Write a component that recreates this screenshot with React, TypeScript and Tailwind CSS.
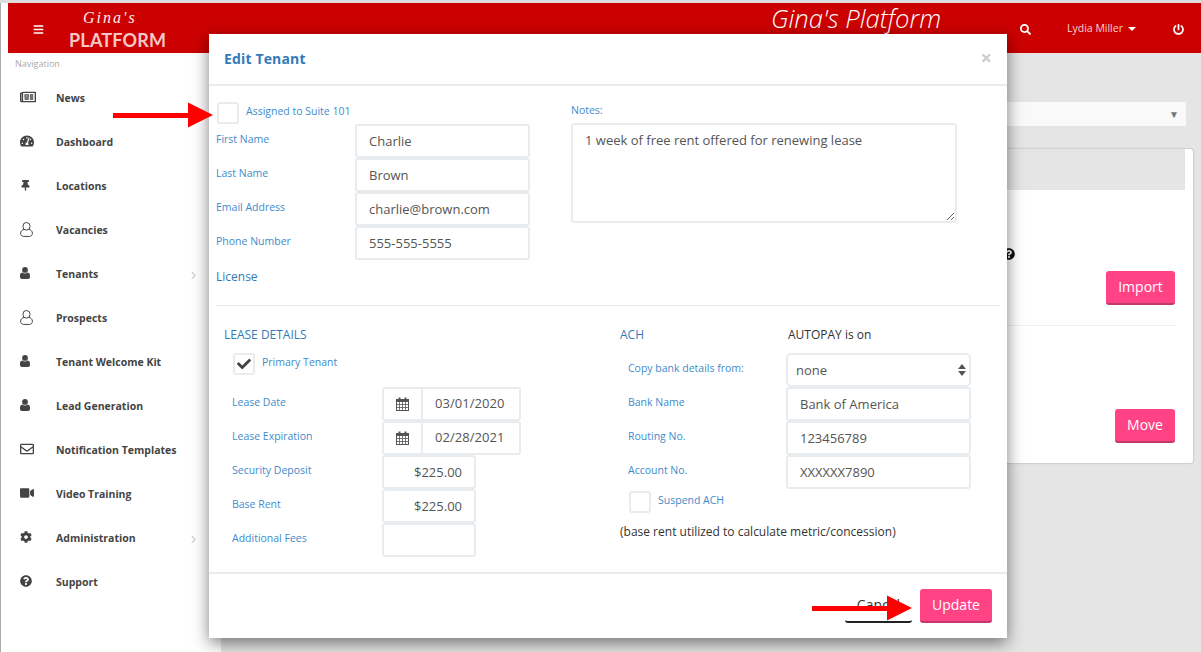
import type { ReactNode } from 'react';
import {
  FaBars,
  FaCheck,
  FaCog,
  FaPowerOff,
  FaQuestionCircle,
  FaRegEnvelope,
  FaRegNewspaper,
  FaSearch,
  FaTachometerAlt,
  FaThumbtack,
  FaVideo,
} from 'react-icons/fa';
import { SlArrowRight } from 'react-icons/sl';

type NavItem = {
  label: string;
  icon: ReactNode;
  chevron?: boolean;
};

function UserSolid() {
  return (
    <svg width="10" height="12" viewBox="0 0 10 12" fill="currentColor">
      <circle cx="5" cy="2.9" r="2.9" />
      <path d="M2.2 5.6C3 6.2 4 6.5 5 6.5s2-.3 2.8-.9C9.2 6 10 7 10 8.6V10c0 1.2-.8 2-2 2H2c-1.2 0-2-.8-2-2V8.6C0 7 .8 6 2.2 5.6z" />
    </svg>
  );
}

function UserOutline() {
  return (
    <svg width="13" height="15" viewBox="0 0 13 15" fill="none" stroke="currentColor" strokeWidth="1">
      <ellipse cx="6.5" cy="4.3" rx="3.6" ry="3.8" />
      <path d="M4 7.4C2 8 .6 9.2.6 11.2c0 1.9 1.2 3.2 3 3.2h5.8c1.8 0 3-1.3 3-3.2 0-2-1.4-3.2-3.4-3.8" />
    </svg>
  );
}

const navItems: NavItem[] = [
  { label: 'News', icon: <FaRegNewspaper size={16} /> },
  { label: 'Dashboard', icon: <FaTachometerAlt size={14} /> },
  { label: 'Locations', icon: <FaThumbtack size={11} /> },
  { label: 'Vacancies', icon: <UserOutline /> },
  { label: 'Tenants', icon: <UserSolid />, chevron: true },
  { label: 'Prospects', icon: <UserOutline /> },
  { label: 'Tenant Welcome Kit', icon: <UserSolid /> },
  { label: 'Lead Generation', icon: <UserSolid /> },
  { label: 'Notification Templates', icon: <FaRegEnvelope size={14} /> },
  { label: 'Video Training', icon: <FaVideo size={14} /> },
  { label: 'Administration', icon: <FaCog size={12} />, chevron: true },
  { label: 'Support', icon: <FaQuestionCircle size={12} /> },
];

function CalendarIcon() {
  return (
    <svg width="13" height="14" viewBox="0 0 13 14" className="text-[#555]">
      <rect x="0.5" y="2.5" width="12" height="11" fill="none" stroke="currentColor" />
      <rect x="0.5" y="2" width="12" height="3" fill="currentColor" />
      <rect x="2.5" y="0.5" width="2" height="3" fill="currentColor" />
      <rect x="8.5" y="0.5" width="2" height="3" fill="currentColor" />
      <path d="M3.5 5v8M6.5 5v8M9.5 5v8M1 7.5h11M1 10.5h11" stroke="currentColor" strokeWidth="0.8" fill="none" />
    </svg>
  );
}

function RedArrow({ className }: { className: string }) {
  return (
    <svg width="100" height="26" viewBox="0 0 100 26" className={className}>
      <rect x="0" y="11" width="76" height="5" fill="#ff0000" />
      <polygon points="75,0.5 100,13 75,25.5" fill="#ff0000" />
    </svg>
  );
}

function Checkbox({ checked }: { checked?: boolean }) {
  return (
    <span className="flex h-[22px] w-[22px] shrink-0 items-center justify-center rounded-[3px] border-2 border-[#e9ecef] bg-white text-[#444]">
      {checked && <FaCheck size={14} />}
    </span>
  );
}

function TextInput({
  value,
  className = 'w-[175px]',
  align = 'text-left',
}: {
  value: string;
  className?: string;
  align?: string;
}) {
  return (
    <input
      readOnly
      value={value}
      className={`h-[34px] rounded-[3px] border-2 border-[#e9ecef] bg-white px-3 text-[13px] text-[#555] outline-none ${align} ${className}`}
    />
  );
}

function FormRow({
  label,
  labelWidth,
  children,
}: {
  label: string;
  labelWidth: string;
  children: ReactNode;
}) {
  return (
    <div className="flex h-[34px]">
      <label className={`pt-[7px] text-[10.5px] leading-[16px] text-[#428bca] ${labelWidth}`}>
        {label}
      </label>
      {children}
    </div>
  );
}

function DateRow({ label, value }: { label: string; value: string }) {
  return (
    <FormRow label={label} labelWidth="w-[150px]">
      <div className="flex h-[34px] w-[139px] rounded-[3px] border-2 border-[#e9ecef] bg-white">
        <span className="flex w-[39px] items-center justify-center border-r-2 border-[#e9ecef]">
          <CalendarIcon />
        </span>
        <span className="flex flex-1 items-center pl-[12px] text-[13px] tracking-[0.05px] text-[#555]">{value}</span>
      </div>
    </FormRow>
  );
}

function PinkButton({ children, className }: { children: ReactNode; className: string }) {
  return (
    <button
      className={`h-[34px] rounded-[3px] border-b-2 border-[#c23a6c] bg-[#ff4385] pb-[2px] text-[14px] text-[#fff] ${className}`}
    >
      {children}
    </button>
  );
}

function Sidebar() {
  return (
    <aside className="h-[599px] w-[221px] shrink-0 border-l border-[#aaa] bg-white">
      <div className="h-[24px] pl-[14px] pt-[5px] text-[9px] leading-[12px] text-[#aaa]">Navigation</div>
      <nav>
        {navItems.map(({ label, icon, chevron }) => (
          <div key={label} className="flex h-[44px] items-center text-[#444]">
            <span className="flex w-[55px] shrink-0 justify-start pb-[4px] pl-[19px]">{icon}</span>
            <span className="flex-1 text-[10.5px] font-bold">{label}</span>
            {chevron && (
              <span className="mr-[24px] text-[#999]">
                <SlArrowRight size={7} />
              </span>
            )}
          </div>
        ))}
      </nav>
    </aside>
  );
}

function Header() {
  return (
    <header className="flex h-[50px] flex-1 items-center bg-[#cc0000] text-white">
      <FaBars size={11} className="ml-[25px] mt-[2px] shrink-0" />
      <div className="ml-[25px] mt-[2px] flex h-[40px] w-[98px] shrink-0 flex-col select-none">
        <span className="h-[22px] pl-[14px] font-['Liberation_Serif'] text-[16px] italic leading-[18px] tracking-[2px] text-[#fbeaea]">
          Gina's
        </span>
        <span className="font-['Lato'] text-[18px] leading-[18px] font-bold tracking-[0.2px] whitespace-nowrap text-[#f6c6c6]">
          PLATFORM
        </span>
      </div>
      <span className="ml-[604px] mb-[18px] w-[172px] shrink-0 whitespace-nowrap text-[25.6px] leading-[30px] font-light italic">
        Gina's Platform
      </span>
      <FaSearch size={11} className="ml-[77px] mt-[2px] shrink-0" />
      <span className="ml-[36px] mt-[2px] text-[10.5px] whitespace-nowrap text-[#f5d5d5]">Lydia Miller</span>
      <span className="ml-[5px] mt-[2px] h-0 w-0 border-x-[4px] border-t-[4px] border-x-transparent border-t-white" />
      <FaPowerOff size={11} className="ml-[37px] mt-[2px] shrink-0" />
    </header>
  );
}

function MainContent() {
  return (
    <main className="flex-1 pl-[8px] pr-[8px] pt-[49px]">
      <div className="mr-[7px] flex h-[24px] items-center justify-end bg-[#f9f9f9] pr-[7px] text-[10px] text-[#777]">
        ▼
      </div>
      <section className="mt-[23px] h-[314px] rounded-[3px] bg-white shadow-[0_0_2px_rgba(0,0,0,0.35)]">
        <div className="mr-[8px] h-[41px] bg-[#e5e5e5]" />
        <div className="flex flex-col items-end pr-[18px]">
          <FaQuestionCircle size={12} className="mr-[160px] mt-[58px] text-[#111]" />
          <PinkButton className="mt-[11px] w-[69px]">Import</PinkButton>
          <div className="mt-[20px] h-px w-full bg-[#eee]" />
          <PinkButton className="mt-[83px] w-[60px]">Move</PinkButton>
        </div>
      </section>
    </main>
  );
}

function EditTenantModal() {
  return (
    <div className="absolute left-[209px] top-[34px] flex h-[604px] w-[798px] flex-col bg-white shadow-[0_5px_15px_rgba(0,0,0,0.5)]">
      <div className="flex h-[52px] shrink-0 items-center justify-between border-b-2 border-[#e9ecef] pl-[15px] pr-[15px]">
        <h4 className="mb-[2px] text-[14px] font-bold tracking-[0.15px] text-[#337ab7]">Edit Tenant</h4>
        <span className="mb-[2px] text-[20px] font-bold text-[#ccc]">×</span>
      </div>

      <div className="flex h-[219px] shrink-0 pl-[7px]">
        <div className="w-[355px] pt-[16px]">
          <div className="ml-px flex h-[22px] items-start gap-[7px]">
            <Checkbox />
            <span className="pt-[1px] text-[10.5px] leading-[16px] text-[#428bca]">Assigned to Suite 101</span>
          </div>
          <FormRow label="First Name" labelWidth="w-[139px]">
            <TextInput value="Charlie" />
          </FormRow>
          <FormRow label="Last Name" labelWidth="w-[139px]">
            <TextInput value="Brown" />
          </FormRow>
          <FormRow label="Email Address" labelWidth="w-[139px]">
            <TextInput value="charlie@brown.com" />
          </FormRow>
          <FormRow label="Phone Number" labelWidth="w-[139px]">
            <TextInput value="555-555-5555" />
          </FormRow>
          <div className="flex h-[34px] items-center text-[12px] text-[#337ab7]">License</div>
        </div>
        <div className="pt-[17px]">
          <label className="block h-[14px] text-[10.5px] leading-[14px] text-[#428bca]">Notes:</label>
          <textarea
            readOnly
            className="mt-[6px] h-[100px] w-[386px] rounded-[3px] border-2 border-[#e9ecef] px-3 py-[6px] text-[13px] text-[#555] outline-none"
            defaultValue="1 week of free rent offered for renewing lease"
          />
        </div>
      </div>

      <div className="mx-[7px] h-px shrink-0 bg-[#e9ecef]" />

      <div className="flex h-[266px] shrink-0 pt-[20px]">
        <div className="w-[411px] pl-[15px]">
          <div className="h-[18px] text-[12px] leading-[18px] text-[#337ab7]">LEASE DETAILS</div>
          <div className="ml-[9px] mt-[9px] flex h-[22px] items-start gap-[7px]">
            <Checkbox checked />
            <span className="pt-[1px] text-[10.5px] leading-[16px] text-[#428bca]">Primary Tenant</span>
          </div>
          <div className="ml-[8px] mt-[12px]">
            <DateRow label="Lease Date" value="03/01/2020" />
            <DateRow label="Lease Expiration" value="02/28/2021" />
            <FormRow label="Security Deposit" labelWidth="w-[150px]">
              <TextInput value="$225.00" className="w-[94px]" align="text-right" />
            </FormRow>
            <FormRow label="Base Rent" labelWidth="w-[150px]">
              <TextInput value="$225.00" className="w-[94px]" align="text-right" />
            </FormRow>
            <FormRow label="Additional Fees" labelWidth="w-[150px]">
              <TextInput value="" className="w-[94px]" align="text-right" />
            </FormRow>
          </div>
        </div>

        <div className="flex-1">
          <div className="flex h-[18px] text-[12px] leading-[18px]">
            <span className="w-[168px] text-[#337ab7]">ACH</span>
            <span className="text-[#333]">AUTOPAY is on</span>
          </div>
          <div className="ml-[8px] mt-[9px]">
            <FormRow label="Copy bank details from:" labelWidth="w-[158px]">
              <div className="relative h-[34px] w-[185px] rounded-[5px] border-2 border-[#e9ecef] bg-white pl-[8px] text-[13px] leading-[30px] text-[#555]">
                none
                <svg width="8" height="12" viewBox="0 0 8 12" className="absolute right-[3px] top-[9px] text-[#555]">
                  <polygon points="4,0 8,5 0,5" fill="currentColor" />
                  <polygon points="0,7 8,7 4,12" fill="currentColor" />
                </svg>
              </div>
            </FormRow>
            <FormRow label="Bank Name" labelWidth="w-[158px]">
              <TextInput value="Bank of America" className="w-[185px]" />
            </FormRow>
            <FormRow label="Routing No." labelWidth="w-[158px]">
              <TextInput value="123456789" className="w-[185px]" />
            </FormRow>
            <FormRow label="Account No." labelWidth="w-[158px]">
              <TextInput value="XXXXXX7890" className="w-[185px]" />
            </FormRow>
            <div className="ml-px mt-[2px] flex h-[22px] items-start gap-[7px]">
              <Checkbox />
              <span className="pt-[1px] text-[10.5px] leading-[16px] text-[#428bca]">Suspend ACH</span>
            </div>
          </div>
          <p className="mt-[10px] h-[18px] text-[12px] leading-[18px] text-[#333]">
            (base rent utilized to calculate metric/concession)
          </p>
        </div>
      </div>

      <div className="flex flex-1 items-start justify-end gap-[8px] border-t-2 border-[#e9ecef] pr-[15px] pt-[15px]">
        <button className="h-[34px] w-[67px] rounded-[3px] border-b-2 border-[#222] bg-white pb-[2px] text-[14px] text-[#333]">
          Cancel
        </button>
        <PinkButton className="w-[72px]">Update</PinkButton>
      </div>
    </div>
  );
}

export default function App() {
  return (
    <div className="relative h-[652px] w-[1201px] overflow-hidden bg-[#e5e5e5] font-['Open_Sans',sans-serif]">
      <div className="h-[3px] bg-[#ddd]" />
      <div className="flex">
        <div className="w-[8px] border-l border-[#aaa] bg-white" />
        <Header />
      </div>
      <div className="flex">
        <Sidebar />
        <MainContent />
      </div>
      <EditTenantModal />
      <RedArrow className="absolute left-[113px] top-[102px]" />
      <RedArrow className="absolute left-[812px] top-[595px]" />
    </div>
  );
}
